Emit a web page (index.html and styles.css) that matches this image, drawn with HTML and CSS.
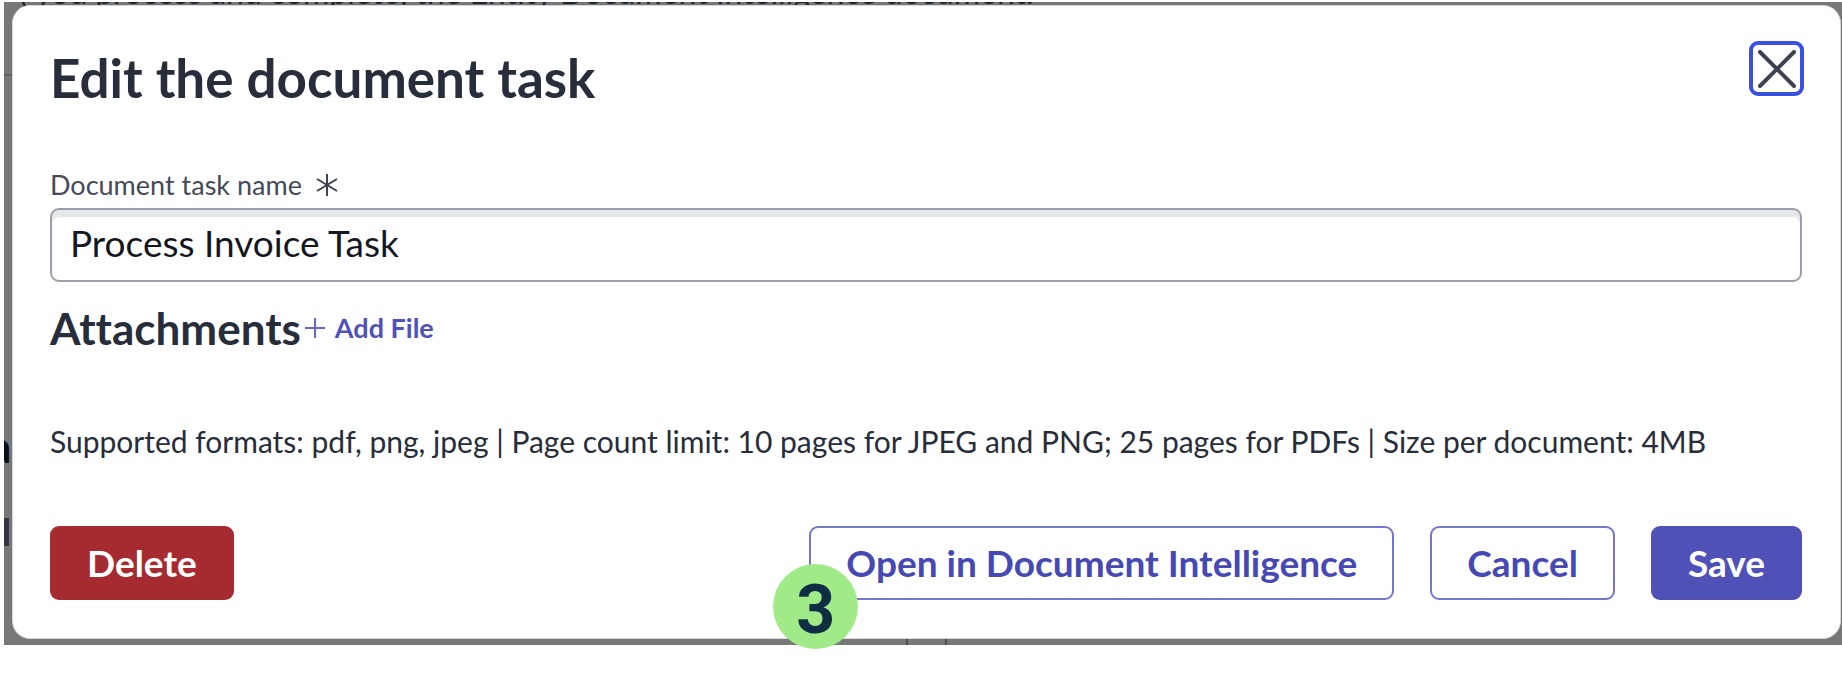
FILE: index.html
```html
<!DOCTYPE html>
<html lang="en">
<head>
<meta charset="utf-8">
<title>Edit the document task</title>
<link rel="stylesheet" href="styles.css">
</head>
<body>
<div class="backdrop">
  <div class="page-behind" aria-hidden="true">
    <span class="behind-line">( you process and complete, the Entity Document Intelligence document.</span>
    <span class="behind-rule"></span>
    <span class="behind-letter">a</span>
    <span class="behind-bar"></span>
    <span class="behind-ticks"></span>
  </div>
  <main class="dialog" role="dialog" aria-labelledby="dialog-title">
    <header class="dialog-header">
      <h1 class="dialog-title" id="dialog-title">Edit the document task</h1>
      <button class="close" type="button" aria-label="Close">
        <svg class="close-icon" viewBox="0 0 38 38" aria-hidden="true"><path d="M2 2 36 36M36 2 2 36"/></svg>
      </button>
    </header>
    <div class="field">
      <label class="field-label" for="task-name">Document task name
        <svg class="required" viewBox="0 0 22 22" aria-hidden="true"><path d="M11 0V22M1 5 21 17M21 5 1 17"/></svg>
      </label>
      <input class="field-input" id="task-name" type="text" value="Process Invoice Task" required>
    </div>
    <section class="attachments">
      <h2 class="attachments-title">Attachments</h2>
      <button class="add-file" type="button">
        <svg class="plus" viewBox="0 0 20 20" aria-hidden="true"><path d="M10 0V20M0 10H20"/></svg>
        Add File
      </button>
    </section>
    <p class="hint">Supported formats: pdf, png, jpeg | Page count limit: 10 pages for JPEG and PNG; 25 pages for PDFs | Size per document: 4MB</p>
    <footer class="actions">
      <button class="btn btn-danger" type="button">Delete</button>
      <div class="open-wrap">
        <button class="btn btn-outline" type="button">Open in Document Intelligence</button>
        <span class="step-badge">3</span>
      </div>
      <button class="btn btn-outline" type="button">Cancel</button>
      <button class="btn btn-primary" type="button">Save</button>
    </footer>
  </main>
</div>
</body>
</html>
```
FILE: styles.css
```css
* { box-sizing: border-box; }
body {
  margin: 0;
  min-height: 100vh;
  padding: 2px 0 0 4px;
  background: #fff;
  font-family: Lato, "Liberation Sans", sans-serif;
  font-variant-ligatures: none;
  color: #272d3a;
}
.backdrop {
  position: relative;
  padding: 3px 1px 6px 8px;
  background: #777;
}
.page-behind {
  position: absolute;
  inset: 0;
  overflow: hidden;
}
.page-behind span { position: absolute; }
.behind-line {
  left: 15px;
  top: -28px;
  font-size: 32px;
  line-height: 36px;
  white-space: nowrap;
  color: #20222c;
}
.behind-rule { left: 0; top: 72px; width: 8px; height: 2px; background: #606068; }
.behind-letter {
  left: -15px;
  top: 424px;
  font-size: 44px;
  line-height: 40px;
  font-weight: 700;
  color: #0c0e14;
}
.behind-bar { left: 0; top: 516px; width: 5px; height: 28px; background: #33353f; }
.behind-ticks {
  left: 902px;
  bottom: 0;
  width: 41px;
  height: 6px;
  border: solid #4c4e55;
  border-width: 0 2px;
}
.dialog {
  position: relative;
  padding: 32px 38px 38px 37px;
  border: 1px solid #d5d6de;
  border-radius: 18px;
  background: #fff;
}
.dialog-header {
  display: flex;
  justify-content: space-between;
  align-items: flex-start;
}
.dialog-title {
  margin: 4px 0 0;
  font-size: 53px;
  line-height: 72px;
  font-weight: 700;
}
.close {
  display: flex;
  align-items: center;
  justify-content: center;
  width: 55px;
  height: 55px;
  margin: 3px -2px 0 0;
  padding: 0;
  border: 4px solid #3a50e0;
  border-radius: 9px;
  background: #fff;
}
.close-icon { width: 38px; height: 38px; fill: none; stroke: #3c4250; stroke-width: 4; stroke-linecap: round; }
.field { margin-top: 53px; }
.field-label {
  display: flex;
  align-items: center;
  gap: 14px;
  font-size: 27px;
  line-height: 36px;
  color: #444a58;
}
.required { width: 22px; height: 22px; stroke: #3c4250; stroke-width: 2; }
.field-input {
  display: block;
  width: 100%;
  height: 74px;
  margin-top: 5px;
  padding: 0 18px 6px;
  border: 2px solid #9c9eab;
  border-radius: 9px;
  background: #fff;
  box-shadow: inset 0 7px 1px #e6e8e8;
  font: 37px/44px Lato, "Liberation Sans", sans-serif;
  color: #15171e;
}
.attachments {
  display: flex;
  align-items: center;
  gap: 4px;
  margin-top: 20px;
}
.attachments-title {
  margin: 0;
  font-size: 44px;
  line-height: 52px;
  font-weight: 700;
}
.add-file {
  display: flex;
  align-items: center;
  gap: 10px;
  padding: 0;
  border: 0;
  background: none;
  font: 700 27px/36px Lato, "Liberation Sans", sans-serif;
  color: #4f52b9;
}
.plus { width: 20px; height: 20px; stroke: #6568c4; stroke-width: 2; }
.hint {
  margin: 69px 0 0;
  font-size: 30px;
  line-height: 36px;
  color: #272d3a;
}
.actions {
  display: flex;
  gap: 36px;
  margin-top: 67px;
}
.btn {
  height: 74px;
  padding: 0 35px;
  border: 2px solid transparent;
  border-radius: 9px;
  font: 700 37px/44px Lato, "Liberation Sans", sans-serif;
  white-space: nowrap;
}
.btn-danger { background: #a62b31; color: #fff; }
.btn-outline { border-color: #7477cb; background: #fff; color: #4649b3; }
.btn-primary { background: #4f51b6; color: #fff; }
.open-wrap { position: relative; margin-left: auto; }
.step-badge {
  position: absolute;
  left: -36px;
  top: 38px;
  display: flex;
  align-items: center;
  justify-content: center;
  width: 85px;
  height: 85px;
  padding-top: 6px;
  border-radius: 50%;
  background: #a0eb87;
  font: 700 68px/78px Roboto, "Liberation Sans", sans-serif;
  color: #112d43;
}
```
